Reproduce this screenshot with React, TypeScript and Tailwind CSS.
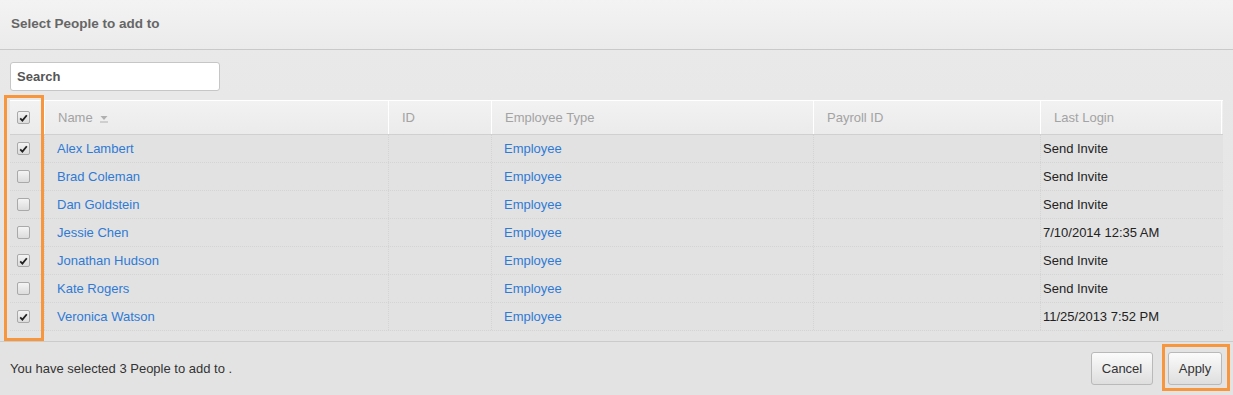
import React from "react";

const rows = [
  { name: "Alex Lambert", type: "Employee", login: "Send Invite", checked: true },
  { name: "Brad Coleman", type: "Employee", login: "Send Invite", checked: false },
  { name: "Dan Goldstein", type: "Employee", login: "Send Invite", checked: false },
  { name: "Jessie Chen", type: "Employee", login: "7/10/2014 12:35 AM", checked: false },
  { name: "Jonathan Hudson", type: "Employee", login: "Send Invite", checked: true },
  { name: "Kate Rogers", type: "Employee", login: "Send Invite", checked: false },
  { name: "Veronica Watson", type: "Employee", login: "11/25/2013 7:52 PM", checked: true },
];

function Checkbox({ checked }: { checked: boolean }) {
  return (
    <div className="w-[13px] h-[13px] rounded-[2px] border border-[#a9a9a9] bg-gradient-to-b from-[#f4f4f4] to-[#dcdcdc] flex items-center justify-center">
      {checked && (
        <svg width="9" height="8" viewBox="0 0 9 8">
          <path d="M1.2 4.4 L3.4 6.6 L7.8 1.2" fill="none" stroke="#222" strokeWidth="1.8" />
        </svg>
      )}
    </div>
  );
}

const cols = "grid grid-cols-[35px_344px_103px_322px_227px_181px]";

export default function App() {
  return (
    <div
      className="w-[1233px] h-[395px] bg-[#e4e4e4] flex flex-col text-[13px] text-[#333]"
      style={{ fontFamily: '"Liberation Sans", Arial, sans-serif' }}
    >
      <div className="h-[50px] shrink-0 border-b border-[#c9c9c9] bg-gradient-to-b from-[#f3f3f3] to-[#ebebeb] flex items-center px-[11px]">
        <span className="text-[13.5px] font-bold text-[#666]">Select People to add to</span>
      </div>

      <div className="flex-1 bg-gradient-to-b from-[#e9e9e9] to-[#e3e3e3] px-[10px] pt-[12px]">
        <div className="w-[210px] h-[29px] bg-white border border-[#c6c6c6] rounded-[3px] flex items-center px-[6px]">
          <span className="text-[13px] font-bold text-[#555]">Search</span>
        </div>

        <div className="relative mt-[9px]">
          <div className={`${cols} h-[35px] border-t border-white border-b border-b-[#d0d0d0] bg-gradient-to-b from-[#f2f2f2] to-[#ebebeb] text-[#a3a3a3]`}>
            <div className="flex items-center pl-[7px] border-r border-white">
              <Checkbox checked />
            </div>
            <div className="flex items-center pl-[13px] border-r border-white">
              <span>Name</span>
              <svg width="8" height="8" viewBox="0 0 8 8" className="ml-[7px] mt-[2px]">
                <path d="M0.5 1 L7.5 1 L4 5 Z" fill="#b0b0b0" />
                <rect x="0" y="6.5" width="8" height="1" fill="#b0b0b0" />
              </svg>
            </div>
            <div className="flex items-center pl-[13px] border-r border-white">ID</div>
            <div className="flex items-center pl-[13px] border-r border-white">Employee Type</div>
            <div className="flex items-center pl-[13px] border-r border-white">Payroll ID</div>
            <div className="flex items-center pl-[13px] border-r border-white">Last Login</div>
          </div>

          {rows.map((r) => (
            <div key={r.name} className={`${cols} h-[28px] bg-[#e2e2e2] border-b border-dotted border-[#d4d4d4]`}>
              <div className="flex items-center pl-[7px] border-r border-dotted border-[#d4d4d4]">
                <Checkbox checked={r.checked} />
              </div>
              <div className="flex items-center pl-[12px] text-[#2f7ad6] border-r border-dotted border-[#d4d4d4]">{r.name}</div>
              <div className="border-r border-dotted border-[#d4d4d4]" />
              <div className="flex items-center pl-[12px] text-[#2f7ad6] border-r border-dotted border-[#d4d4d4]">{r.type}</div>
              <div className="border-r border-dotted border-[#d4d4d4]" />
              <div className="flex items-center pl-[2px] text-[#222]">{r.login}</div>
            </div>
          ))}

          <div className="absolute left-[-6px] top-[-5px] w-[40px] h-[246px] border-[3px] border-[#f7963c] pointer-events-none" />
        </div>
      </div>

      <div className="h-[54px] shrink-0 border-t border-[#cbcbcb] bg-[#e3e3e3] flex items-center justify-between pl-[10px] pr-[11px]">
        <span className="text-[#333]">You have selected 3 People to add to .</span>
        <div className="flex items-center gap-[15px]">
          <button className="w-[62px] h-[33px] rounded-[3px] border border-[#b9b9b9] bg-gradient-to-b from-[#fbfbfb] to-[#dedede] text-[13px] text-[#333]">
            Cancel
          </button>
          <div className="relative">
            <button className="w-[54px] h-[33px] rounded-[3px] border border-[#b9b9b9] bg-gradient-to-b from-[#fbfbfb] to-[#dedede] text-[13px] text-[#333]">
              Apply
            </button>
            <div className="absolute left-[-6px] top-[-8px] w-[68px] h-[47px] border-[3px] border-[#f7963c] pointer-events-none" />
          </div>
        </div>
      </div>
    </div>
  );
}
